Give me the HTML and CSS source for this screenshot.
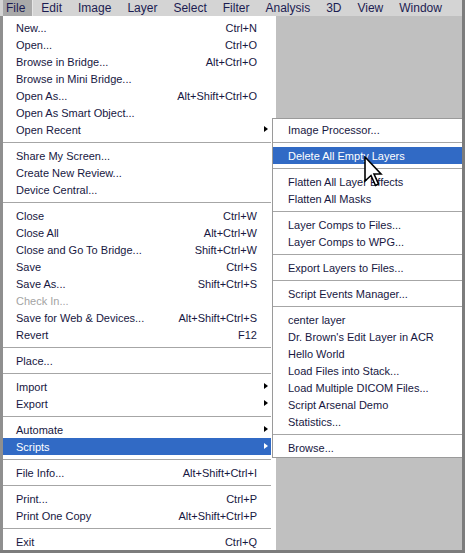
FILE: index.html
```html
<!DOCTYPE html>
<html>
<head>
<meta charset="utf-8">
<link rel="stylesheet" href="styles.css">
</head>
<body>
<div class="screen">
  <div class="menubar">
    <span class="mb-item first active">File</span>
    <span class="mb-item">Edit</span>
    <span class="mb-item">Image</span>
    <span class="mb-item">Layer</span>
    <span class="mb-item">Select</span>
    <span class="mb-item">Filter</span>
    <span class="mb-item">Analysis</span>
    <span class="mb-item">3D</span>
    <span class="mb-item">View</span>
    <span class="mb-item">Window</span>
  </div>
  <div class="workspace">
    <div class="menu">
      <div class="item"><span class="label">New...</span><span class="key">Ctrl+N</span></div>
      <div class="item"><span class="label">Open...</span><span class="key">Ctrl+O</span></div>
      <div class="item"><span class="label">Browse in Bridge...</span><span class="key">Alt+Ctrl+O</span></div>
      <div class="item"><span class="label">Browse in Mini Bridge...</span></div>
      <div class="item"><span class="label">Open As...</span><span class="key">Alt+Shift+Ctrl+O</span></div>
      <div class="item"><span class="label">Open As Smart Object...</span></div>
      <div class="item sub"><span class="label">Open Recent</span><span class="arrow"></span></div>
      <div class="sep"></div>
      <div class="item"><span class="label">Share My Screen...</span></div>
      <div class="item"><span class="label">Create New Review...</span></div>
      <div class="item"><span class="label">Device Central...</span></div>
      <div class="sep"></div>
      <div class="item"><span class="label">Close</span><span class="key">Ctrl+W</span></div>
      <div class="item"><span class="label">Close All</span><span class="key">Alt+Ctrl+W</span></div>
      <div class="item"><span class="label">Close and Go To Bridge...</span><span class="key">Shift+Ctrl+W</span></div>
      <div class="item"><span class="label">Save</span><span class="key">Ctrl+S</span></div>
      <div class="item"><span class="label">Save As...</span><span class="key">Shift+Ctrl+S</span></div>
      <div class="item disabled"><span class="label">Check In...</span></div>
      <div class="item"><span class="label">Save for Web &amp; Devices...</span><span class="key">Alt+Shift+Ctrl+S</span></div>
      <div class="item"><span class="label">Revert</span><span class="key">F12</span></div>
      <div class="sep"></div>
      <div class="item"><span class="label">Place...</span></div>
      <div class="sep"></div>
      <div class="item sub"><span class="label">Import</span><span class="arrow"></span></div>
      <div class="item sub"><span class="label">Export</span><span class="arrow"></span></div>
      <div class="sep"></div>
      <div class="item sub"><span class="label">Automate</span><span class="arrow"></span></div>
      <div class="item sub hl"><span class="label">Scripts</span><span class="arrow"></span></div>
      <div class="sep"></div>
      <div class="item"><span class="label">File Info...</span><span class="key">Alt+Shift+Ctrl+I</span></div>
      <div class="sep"></div>
      <div class="item"><span class="label">Print...</span><span class="key">Ctrl+P</span></div>
      <div class="item"><span class="label">Print One Copy</span><span class="key">Alt+Shift+Ctrl+P</span></div>
      <div class="sep"></div>
      <div class="item"><span class="label">Exit</span><span class="key">Ctrl+Q</span></div>
    </div>
  </div>
  <div class="submenu">
    <div class="item"><span class="label">Image Processor...</span></div>
    <div class="sep"></div>
    <div class="item hl"><span class="label">Delete All Empty Layers</span></div>
    <div class="sep"></div>
    <div class="item"><span class="label">Flatten All Layer Effects</span></div>
    <div class="item"><span class="label">Flatten All Masks</span></div>
    <div class="sep"></div>
    <div class="item"><span class="label">Layer Comps to Files...</span></div>
    <div class="item"><span class="label">Layer Comps to WPG...</span></div>
    <div class="sep"></div>
    <div class="item"><span class="label">Export Layers to Files...</span></div>
    <div class="sep"></div>
    <div class="item"><span class="label">Script Events Manager...</span></div>
    <div class="sep"></div>
    <div class="item"><span class="label">center layer</span></div>
    <div class="item"><span class="label">Dr. Brown's Edit Layer in ACR</span></div>
    <div class="item"><span class="label">Hello World</span></div>
    <div class="item"><span class="label">Load Files into Stack...</span></div>
    <div class="item"><span class="label">Load Multiple DICOM Files...</span></div>
    <div class="item"><span class="label">Script Arsenal Demo</span></div>
    <div class="item"><span class="label">Statistics...</span></div>
    <div class="sep"></div>
    <div class="item"><span class="label">Browse...</span></div>
  </div>
  <svg class="cursor" width="20" height="32" viewBox="0 0 20 32">
    <polygon points="1,1 1,25 7,19.5 11.5,29.5 14.5,28 10,18 17,18" fill="#ffffff" stroke="#000000" stroke-width="1.6" stroke-linejoin="miter"/>
  </svg>
</div>
</body>
</html>
```

FILE: styles.css
```css
html, body {
  margin: 0;
  padding: 0;
}
body {
  width: 465px;
  height: 553px;
  background: #7c7c7c;
  overflow: hidden;
  font-family: "Liberation Sans", Arial, sans-serif;
  color: #17173f;
}
.screen {
  position: relative;
  width: 462px;
  height: 550px;
  background: #c0c0c0;
  overflow: hidden;
  display: flex;
  flex-direction: column;
}
.menubar {
  height: 16px;
  flex: none;
  display: flex;
  align-items: center;
  background: #d4d4d4;
  padding-left: 3px;
  font-size: 12px;
  color: #1c1c52;
}
.mb-item {
  height: 16px;
  line-height: 16px;
  padding: 0 8px;
}
.mb-item.first {
  padding-left: 3px;
}
.mb-item.active {
  background: #a9a9a9;
  box-shadow: inset -1px 0 0 #e6e6e6;
}
.workspace {
  flex: 1;
  display: flex;
  border-left: 3px solid #8f8f8f;
}
.menu {
  width: 273px;
  background: #ffffff;
  padding-top: 3px;
  font-size: 11px;
}
.item {
  position: relative;
  height: 17px;
  display: flex;
  align-items: center;
  justify-content: space-between;
  padding: 0 14px 0 13px;
  white-space: nowrap;
}
.menu .item, .menu .sep {
  margin-right: 5px;
}
.item.disabled {
  color: #a3a3a3;
}
.item.hl {
  background: #316ac5;
  color: #ffffff;
}
.arrow {
  position: absolute;
  right: 3px;
  top: 5px;
  width: 0;
  height: 0;
  border-left: 4px solid #000000;
  border-top: 3.5px solid transparent;
  border-bottom: 3.5px solid transparent;
}
.item.hl .arrow {
  border-left-color: #ffffff;
}
.sep {
  height: 9px;
  position: relative;
}
.sep::after {
  content: "";
  position: absolute;
  left: 0;
  right: 0;
  top: 4px;
  height: 1px;
  background: #a6a6a6;
}
.submenu {
  position: absolute;
  left: 272px;
  top: 118px;
  width: 190px;
  background: #ffffff;
  border-left: 1px solid #9a9a9a;
  border-top: 1px solid #9a9a9a;
  border-bottom: 1px solid #9a9a9a;
  padding: 2px 0 1px;
  font-size: 11px;
}
.submenu .item {
  padding-left: 15px;
}
.cursor {
  position: absolute;
  left: 364px;
  top: 156px;
}
```
